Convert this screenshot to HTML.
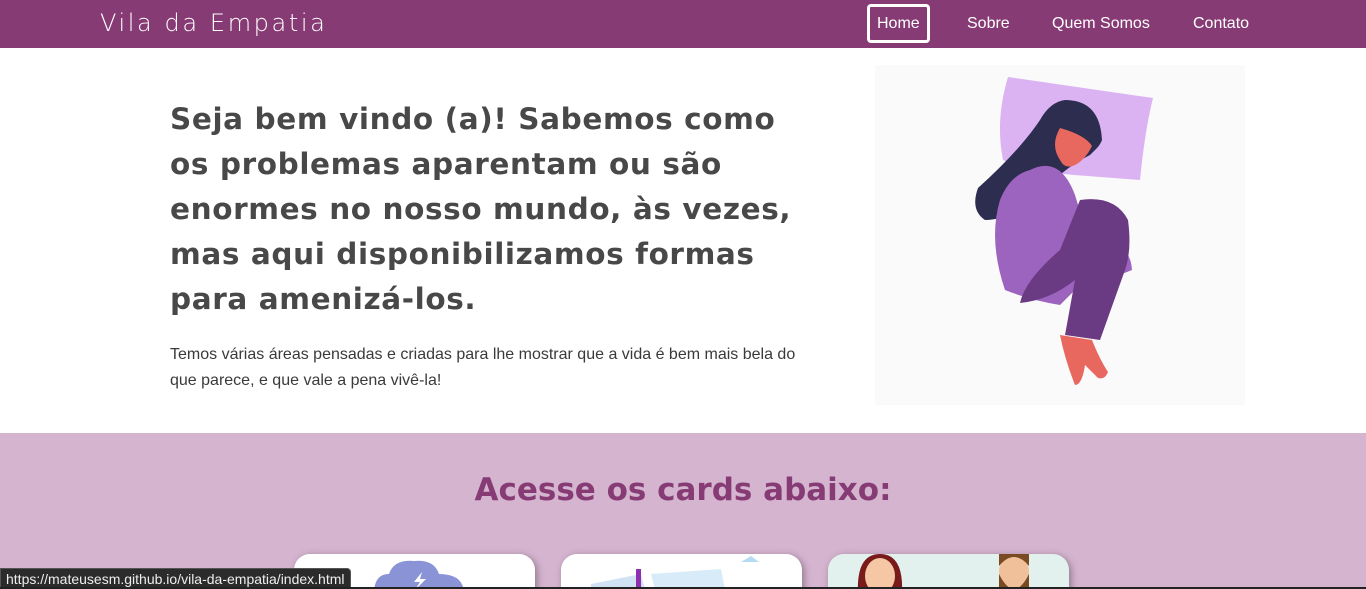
<!DOCTYPE html>
<html><head><meta charset="utf-8"><style>
*{margin:0;padding:0;box-sizing:border-box}
html,body{width:1366px;height:589px;overflow:hidden}
body{background:#fff;font-family:"Liberation Sans",sans-serif;position:relative}
nav{position:absolute;top:0;left:0;width:1366px;height:48px;background:#873b74}
.logo{position:absolute;left:100px;top:9px;color:#fff;font-family:"DejaVu Sans",sans-serif;font-size:24px;letter-spacing:2.6px;font-weight:300}
.nl{position:absolute;top:15px;color:#fff;font-size:16px}
.home{position:absolute;left:867px;top:4px;width:63px;height:39px;border:3px solid #fff;border-radius:4px}
h1{position:absolute;left:170px;top:97px;font-family:"DejaVu Sans",sans-serif;font-weight:bold;font-size:29.5px;line-height:45px;color:#484848;white-space:nowrap;letter-spacing:0.6px}
p{position:absolute;left:170px;top:342px;width:650px;font-size:16px;line-height:26px;color:#3a3a3a}
.sec{position:absolute;top:433px;left:0;width:1366px;height:156px;background:#d5b4d0;overflow:hidden}
h2{position:absolute;top:472px;width:1366px;text-align:center;font-family:"DejaVu Sans",sans-serif;font-weight:bold;font-size:31px;color:#873b74}
.card{position:absolute;top:121px;width:241px;height:60px;background:#fff;border-radius:16px;box-shadow:2px 2px 8px rgba(0,0,0,.35);overflow:hidden}
.status{position:absolute;left:0;top:568px;height:21px;padding:0 5px;background:#2b2b2b;color:#eee;font-size:14px;line-height:21px;border-radius:0 4px 0 0;border:1px solid #555}
.bar{position:absolute;left:0;top:587px;width:1366px;height:2px;background:#222}
</style></head><body>
<nav>
<div class="logo">Vila da Empatia</div>
<div class="home"></div>
<span class="nl" style="left:877px">Home</span>
<span class="nl" style="left:967px">Sobre</span>
<span class="nl" style="left:1052px">Quem Somos</span>
<span class="nl" style="left:1193px">Contato</span>
</nav>
<h1>Seja bem vindo (a)! Sabemos como<br>os problemas aparentam ou são<br>enormes no nosso mundo, às vezes,<br>mas aqui disponibilizamos formas<br>para amenizá-los.</h1>
<p>Temos várias áreas pensadas e criadas para lhe mostrar que a vida é bem mais bela do<br>que parece, e que vale a pena vivê-la!</p>
<svg style="position:absolute;left:860px;top:60px" width="400" height="350" viewBox="0 0 400 350">
<rect x="15" y="5" width="370" height="340" fill="#fafafa"/>
<path d="M148 17 L293 38 Q285 70 280 120 L214 115 Q160 110 143 100 Q135 60 148 17Z" fill="#dcb3f2"/>
<path d="M205 40 Q240 40 242 80 Q240 85 237 88 L230 95 Q200 110 175 140 Q150 160 125 160 Q110 150 118 128 Q160 90 180 60 Q190 42 205 40Z" fill="#2d2d4f"/>
<path d="M200 68 Q225 75 232 86 Q225 100 215 105 Q205 110 200 100 Q190 85 200 68Z" fill="#e8685f"/>
<path d="M170 110 Q200 95 215 135 Q225 170 240 190 Q270 180 272 210 Q250 220 230 215 L200 245 Q170 240 145 230 Q128 180 140 140 Q150 115 170 110Z" fill="#9c64bf"/>
<path d="M220 140 Q255 135 268 160 Q272 190 265 210 L240 280 L205 275 L215 220 Q190 240 160 243 Q165 220 200 190Z" fill="#6a3a82"/>
<path d="M200 275 L232 280 Q240 300 248 312 Q245 320 238 318 L225 305 Q222 325 215 325 Q205 300 200 275Z" fill="#e8685f"/>
</svg>
<div class="sec">
<div class="card" style="left:294px"><svg width="241" height="40"><path d="M80 40 Q80 20 95 20 Q100 5 120 7 Q140 5 145 20 Q170 20 170 40Z" fill="#8a93d6"/><path d="M128 18 L120 28 L126 28 L121 36 L132 25 L126 25Z" fill="#fff"/></svg></div>
<div class="card" style="left:561px"><svg width="241" height="40"><path d="M30 30 L80 20 L85 40 L30 40Z" fill="#cfe3f5"/><path d="M90 20 L160 15 L165 40 L95 40Z" fill="#d8ebf8"/><rect x="75" y="15" width="5" height="25" fill="#8e2fb0"/><path d="M180 8 L190 2 L198 8Z" fill="#b5dbf5"/></svg></div>
<div class="card" style="left:828px;background:#e3f1ee"><svg width="241" height="40"><path d="M30 40 Q28 0 52 0 Q76 0 74 40Z" fill="#7a1b1b"/><ellipse cx="52" cy="22" rx="15" ry="18" fill="#f6c7a4"/><ellipse cx="186" cy="18" rx="15" ry="18" fill="#f0c09a"/><path d="M171 20 Q186 50 201 20 L201 35 Q186 45 171 35Z" fill="#7a4a22"/><path d="M171 12 Q186 -6 201 12 L201 0 L171 0Z" fill="#7a4a22"/></svg></div>
</div>
<h2>Acesse os cards abaixo:</h2>
<div class="status">https://mateusesm.github.io/vila-da-empatia/index.html</div>
<div class="bar"></div>
</body></html>
